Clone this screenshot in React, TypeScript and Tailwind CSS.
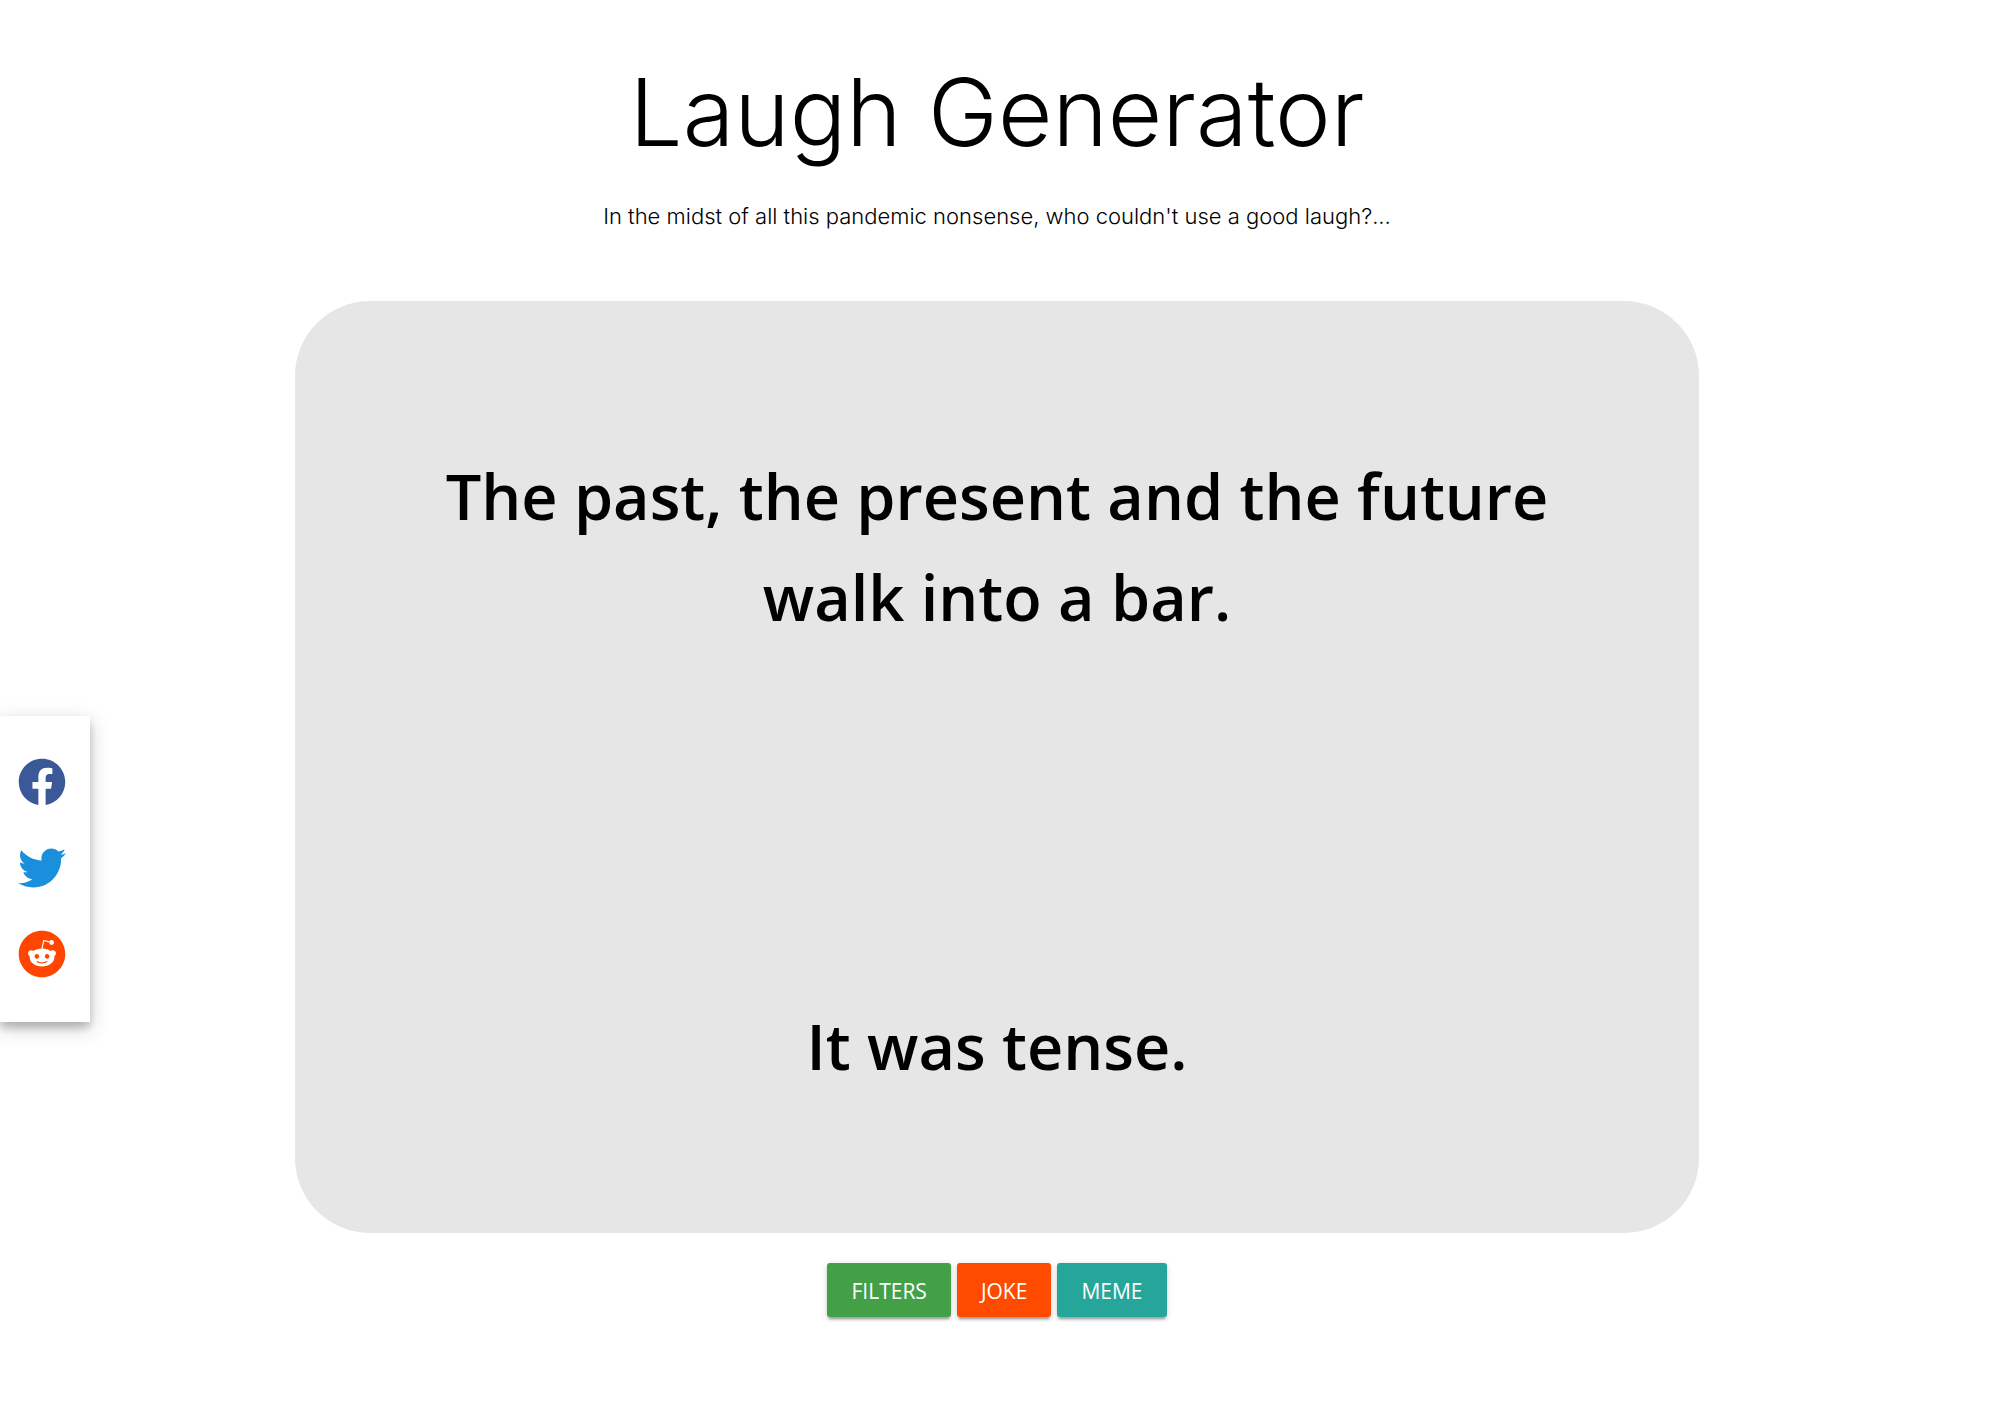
import { FaFacebook, FaTwitter, FaReddit } from "react-icons/fa";

const shares = [
  { name: "Share on Facebook", Icon: FaFacebook, color: "text-[#3b5998]" },
  { name: "Share on Twitter", Icon: FaTwitter, color: "text-[#1a8fdb]" },
  { name: "Share on Reddit", Icon: FaReddit, color: "text-[#ff4500]" },
];

const actions = [
  { label: "FILTERS", color: "bg-[#43a047]" },
  { label: "JOKE", color: "bg-[#ff4b00]" },
  { label: "MEME", color: "bg-[#26a69a]" },
];

export default function App() {
  return (
    <div className="min-h-screen bg-white pr-[3px] pb-8 text-black">
      <header className="flex flex-col items-center pt-[54px] text-center font-['Inter',sans-serif] font-light">
        <h1 className="text-[94px] leading-[116px]">Laugh Generator</h1>
        <p className="mt-7 text-[22px] leading-[36px]">
          In the midst of all this pandemic nonsense, who couldn't use a good laugh?...
        </p>
      </header>

      <main className="flex flex-col items-center font-['Open_Sans',sans-serif]">
        <section className="mt-[67px] flex min-h-[932px] w-[70.4%] flex-col items-center justify-between rounded-[75px] bg-[#e6e6e6] px-32 pt-[144px] pb-[137px] text-center text-[63px] leading-[101px] font-semibold">
          <p>The past, the present and the future walk into a bar.</p>
          <p>It was tense.</p>
        </section>

        <div className="mt-[30px] flex gap-1.5">
          {actions.map(({ label, color }) => (
            <button
              key={label}
              type="button"
              className={`rounded-[3px] px-6 pt-0.5 text-[21px] leading-[52px] text-white shadow-[0_3px_3px_rgba(0,0,0,0.14),0_1px_7px_rgba(0,0,0,0.12),0_4px_2px_-2px_rgba(0,0,0,0.2)] ${color}`}
            >
              {label}
            </button>
          ))}
        </div>
      </main>

      <nav
        aria-label="Share"
        className="fixed top-[716px] left-0 flex flex-col gap-[38px] bg-white pt-[42px] pr-6 pb-[44px] pl-[18px] shadow-[0_6px_8px_rgba(0,0,0,0.2),0_6px_20px_rgba(0,0,0,0.19)]"
      >
        {shares.map(({ name, Icon, color }) => (
          <a key={name} href="#" aria-label={name} className={color}>
            <Icon className="size-12" />
          </a>
        ))}
      </nav>
    </div>
  );
}
